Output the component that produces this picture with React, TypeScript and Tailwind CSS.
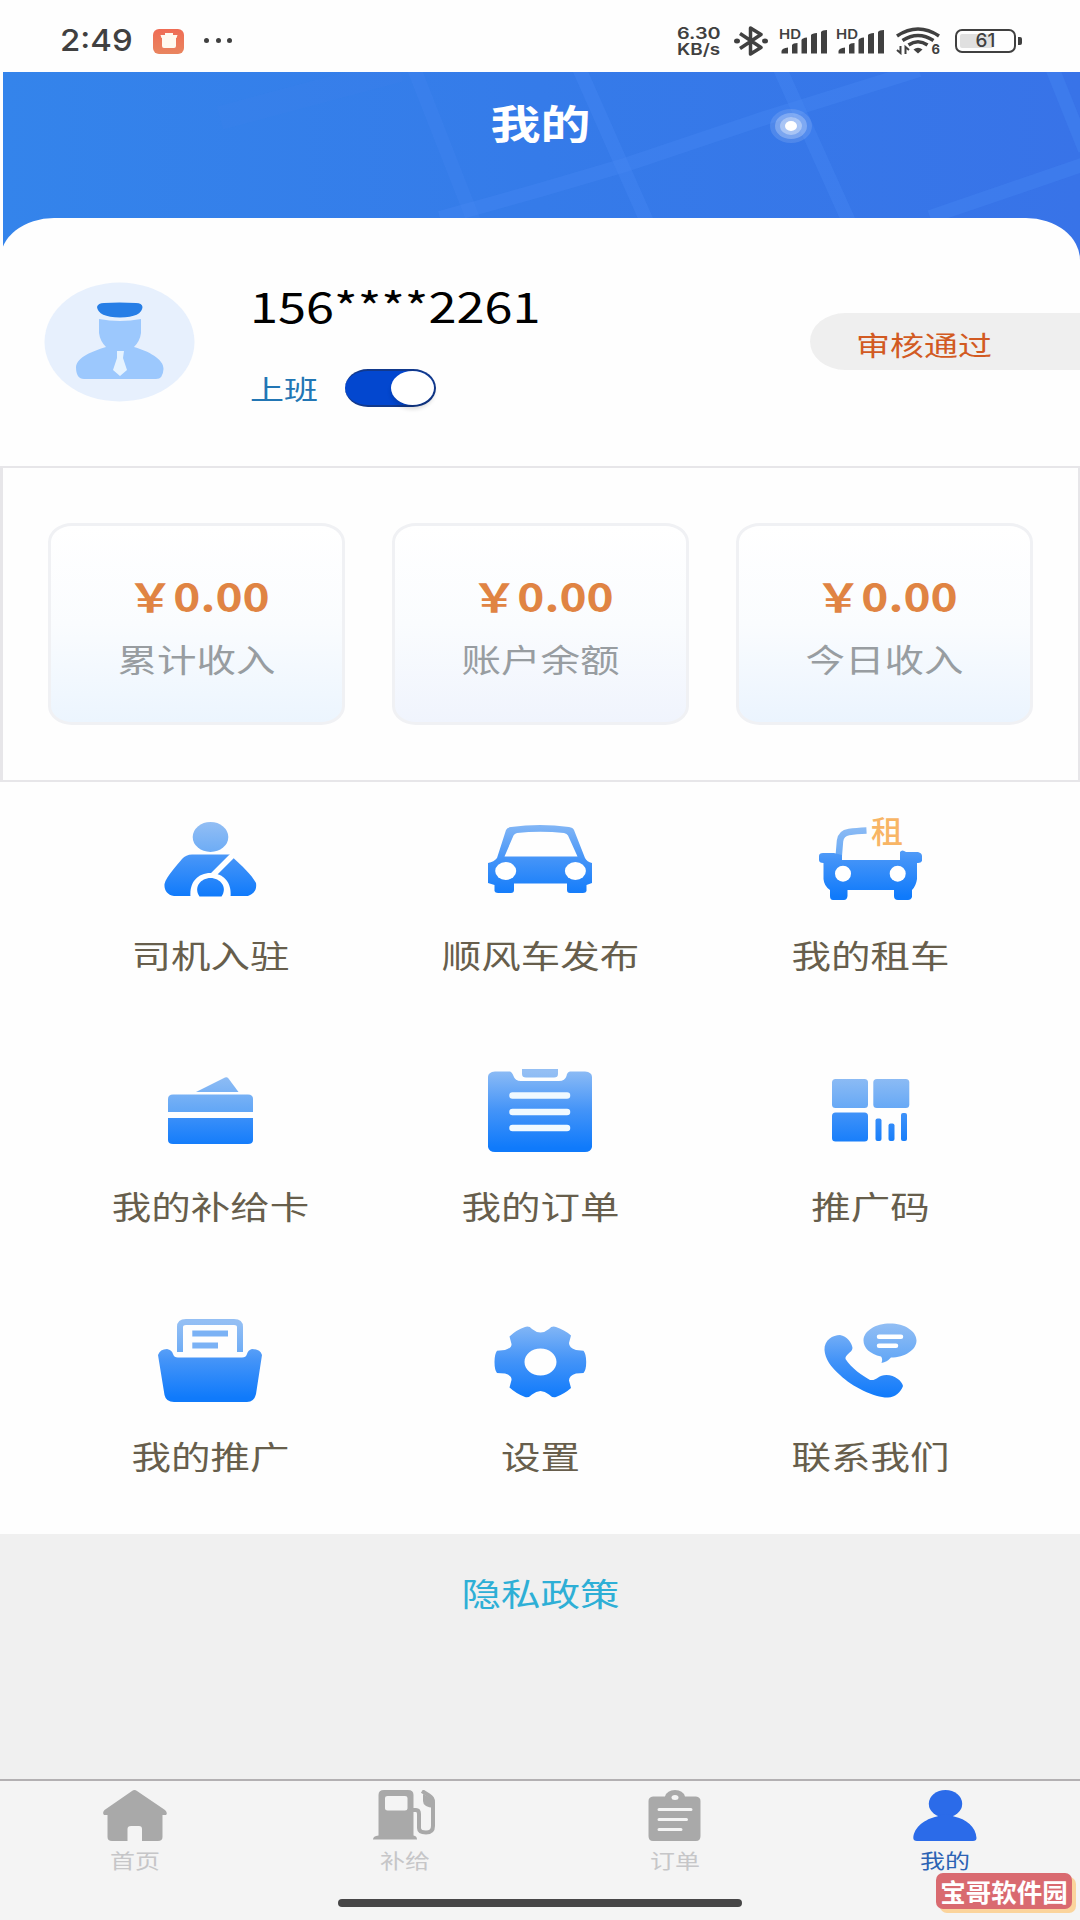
import type { ReactNode } from "react";
import clsx from "clsx";

const stats = [
  { label: "累计收入", value: "￥0.00", bg: "to-[#ecf5fe]" },
  { label: "账户余额", value: "￥0.00", bg: "to-[#f0f4fd]" },
  { label: "今日收入", value: "￥0.00", bg: "to-[#ebf4fe]" },
];

function Gradients() {
  return (
    <svg className="absolute w-0 h-0">
      <defs>
        <linearGradient id="blue" gradientUnits="userSpaceOnUse" x1="0" y1="4" x2="0" y2="80">
          <stop offset="0" stopColor="#8abaf5" />
          <stop offset="0.5" stopColor="#4494f8" />
          <stop offset="1" stopColor="#0f7afb" />
        </linearGradient>
        <linearGradient id="pale" gradientUnits="userSpaceOnUse" x1="0" y1="4" x2="0" y2="46">
          <stop offset="0" stopColor="#94bff4" />
          <stop offset="1" stopColor="#5fa5f6" />
        </linearGradient>
      </defs>
    </svg>
  );
}

function MenuIcon({ children }: { children: ReactNode }) {
  return (
    <svg width="104" height="86" viewBox="0 0 104 86" fill="url(#blue)" className="overflow-visible">
      {children}
    </svg>
  );
}

const menu = [
  {
    label: "司机入驻",
    icon: (
      <MenuIcon>
        <ellipse cx="52.5" cy="20" rx="17.8" ry="15" fill="url(#pale)" />
        <path d="M16 79C9 78 6 73 6.5 67C8 60 20 47 24 42Q28 37.5 34 37.5H72L77 42.5C82 47 94 58 98 66C99 73 96 77 90 79Z" />
        <path d="M76 37L53 60" stroke="#fff" strokeWidth="5.5" />
        <path d="M32.500 80C31 65 40 56 52.500 56S74 65 72.500 80Z" fill="#fff" />
        <path d="M41.500 79.500C35 70 43 61 52.500 61S70 70 63.500 79.500Z" />
      </MenuIcon>
    ),
  },
  {
    label: "顺风车发布",
    icon: (
      <MenuIcon>
        <path
          fillRule="evenodd"
          d="M0 46Q6 45 9 41L18 13Q19 10.500 23 10Q52 6 81 10Q85 10.500 86 13L97 41Q99 45 104 46V66L98.500 68V74Q98 76 95 76H82Q79 76 79 73V66.500H26V73Q26 76 23 76H10Q7 76 6.500 74V68L0 66ZM16.500 39.500H89.500L80 18.500Q79 16.500 76 16Q52 13.500 29 16Q26.500 16.500 25.500 18.500Z"
        />
        <ellipse cx="17.700" cy="54" rx="10.500" ry="9" fill="#fff" />
        <ellipse cx="87.400" cy="54" rx="10.500" ry="9" fill="#fff" />
      </MenuIcon>
    ),
  },
  {
    label: "我的租车",
    icon: (
      <MenuIcon>
        <path
          d="M20.500 42L22 24Q23 16 31 15Q38 14 48.500 13.500"
          fill="none"
          stroke="url(#pale)"
          strokeWidth="6.500"
        />
        <path d="M1 39Q1 36 5 36H16L24 38V43H82V35Q84 32 88 35H100Q104 36 104 39V44Q103 46 100 46H99V62Q98 69 94 73V80Q93 83 90 83H80Q76 83 76 79V73H29.500V79Q29 83 26 83H15Q12 83 12 79V73Q6 69 5.500 62V46Q1 46 1 43Z" />
        <circle cx="25" cy="56.700" r="8" fill="#fff" />
        <circle cx="79.700" cy="56.700" r="8" fill="#fff" />
        <text
          x="53"
          y="27"
          className="font-['Noto_Sans_CJK_SC',sans-serif] text-[32px] font-medium"
          fill="#f8b565"
          transform="scale(1 0.95)"
        >
          租
        </text>
      </MenuIcon>
    ),
  },
  {
    label: "我的补给卡",
    icon: (
      <MenuIcon>
        <path d="M38 24L67 9.500Q69 8.500 70.500 10.500L80.500 24Z" fill="url(#pale)" />
        <path d="M10 44V31Q10 26.500 15 26.500H90Q95 26.500 95 31V44Z" fill="url(#pale)" />
        <path d="M10 50H95V72Q95 76 90 76H15Q10 76 10 72Z" />
      </MenuIcon>
    ),
  },
  {
    label: "我的订单",
    icon: (
      <MenuIcon>
        <path d="M7 3.500H22Q24 4 25.500 8Q27 13 33 13H71Q77 13 78.500 8Q79 4 82 3.500H97Q104 4 104 9V79Q103 84 97 84H7Q1 84 0 79V9Q0 4 7 3.500Z" />
        <path d="M34 1H70V6Q70 9.500 66 9.500H38Q34 9.500 34 6Z" fill="url(#pale)" />
        <path d="M24.500 27.500H79M24.500 44H79M24.500 60H79" stroke="#f0f9ff" strokeWidth="6.500" strokeLinecap="round" />
      </MenuIcon>
    ),
  },
  {
    label: "推广码",
    icon: (
      <MenuIcon>
        <rect x="14" y="11" width="36" height="29" rx="3.500" fill="url(#pale)" />
        <rect x="55.300" y="11" width="36" height="29" rx="3.500" fill="url(#pale)" />
        <rect x="14" y="44.500" width="36" height="29" rx="3.500" />
        <rect x="57.500" y="50.500" width="6" height="22.500" rx="2" />
        <rect x="70.500" y="55.500" width="6" height="17.500" rx="2" />
        <rect x="83" y="45" width="6" height="28" rx="2" />
      </MenuIcon>
    ),
  },
  {
    label: "我的推广",
    icon: (
      <MenuIcon>
        <path
          d="M22 34V9Q22 4 28 4H76Q82 4 82 9V34"
          fill="none"
          stroke="url(#pale)"
          strokeWidth="6"
        />
        <path d="M34.300 15.500H70M34.300 27.500H60" stroke="#7bb2f5" strokeWidth="6" />
        <path d="M0 37Q2 31 9 31Q14 32 15 36Q16 39.500 20 39.500H84Q88 39.500 89 36Q90 32 94 31Q102 31 104 37L98 76Q96 84 89 84H16Q8 84 6.500 77Z" />
      </MenuIcon>
    ),
  },
  {
    label: "设置",
    icon: (
      <MenuIcon>
        <path
          fillRule="evenodd"
          d="M9 32.700L17 32Q24 30 23.500 26L21.500 18.500Q28 12 37 9Q41 7.500 44 11Q52.500 18 61 11Q64 7.500 68 9Q77 12 83 17.500L81 25Q81 30 88 32L95.500 32.700Q98.200 36 98.200 44T95.500 55L88 55.500Q81 57.500 81 62.500L83 70Q77 75.500 68 79Q64 80 61 76.500Q52.500 69.500 44 76.500Q41 80 37 79Q28 75.500 21.500 69.500L23.500 62Q24 57.500 17 55.500L9 55Q6.500 52 6.500 44T9 32.700ZM52.500 30.500C43.500 30.500 36.500 36.500 36.500 44S43.500 57.500 52.500 57.500S68.500 51.500 68.500 44S61.500 30.500 52.500 30.500Z"
        />
      </MenuIcon>
    ),
  },
  {
    label: "联系我们",
    icon: (
      <MenuIcon>
        <path d="M6.500 32C6 22 15 17 22 17C29 18 34 25 34.500 30C34 35 27 36 27.500 41C33 50 45 58 52 62C59 63 60 57 68.500 57C77 57 84 63 85 68C83 74 77 79.500 70 79.500C58 80 34 69 22 57C13 49 7 41 6.500 32Z" />
        <path
          d="M72 5.500C86.500 5.500 98.500 13 98.500 22.500S86.500 39.500 73 39.500Q69 44 63.500 45Q65 41 63 38.500C52 36 45.500 30 45.500 22.500C45.500 13 57.500 5.500 72 5.500Z"
          fill="url(#pale)"
        />
        <path d="M61 18.700H83M61 27.700H78" stroke="#fff" strokeWidth="4.500" strokeLinecap="round" />
      </MenuIcon>
    ),
  },
];

const tabs = [
  {
    label: "首页",
    icon: (
      <path d="M29 1Q31.500 -1 34 1L62 20Q65 23 63 25H59.500V47Q59.500 51 55 51H39V39Q39 36 36 36H28Q24.500 36 24.500 39V51H9Q4.500 51 4.500 47V25H1Q-1 23 1.500 20Z" />
    ),
  },
  {
    label: "补给",
    icon: (
      <>
        <path
          fillRule="evenodd"
          d="M5.500 5Q5.500 0 11 0H35Q40.500 0 40.500 5V45.500Q44 46 44 49.500H0Q0 46 5.500 45.500ZM14.500 6Q12 6 12 8V18.500Q12 20.500 14.500 20.500H32Q34.500 20.500 34.500 18.500V8Q34.500 6 32 6Z"
        />
        <path
          d="M40 20H43Q46 20 46 24V38Q46 42.500 53 42.500Q60 42.500 60 36V12Q60 8 56 5.500L49 1"
          fill="none"
          stroke="#a9a9a9"
          strokeWidth="4"
        />
        <path d="M50 4L61 10V18Q50 17 50 11Z" />
      </>
    ),
  },
  {
    label: "订单",
    icon: (
      <>
        <path d="M10 6.500H22Q24 0 32 0T42 6.500H53Q57.500 7 57.500 11V46Q57.500 51 53 51H10Q5.500 51 5.500 46V11Q5.500 7 10 6.500Z" />
        <ellipse cx="32" cy="7.500" rx="3.500" ry="2.500" fill="#f4f4f4" />
        <path d="M16 19.500H48M16 29.500H43.500M16 39.500H38" stroke="#f4f4f4" strokeWidth="3" strokeLinecap="round" />
      </>
    ),
  },
  {
    label: "我的",
    active: true,
    icon: (
      <>
        <ellipse cx="32.500" cy="13.800" rx="16.700" ry="13.800" />
        <path d="M0.300 48C1 37 12 29 24 26.500Q32 22 41 26.500C53 29 63 37 63.500 48Q63.500 51 60 51H4Q0.300 51 0.300 48Z" />
      </>
    ),
  },
];

function Signal() {
  return (
    <svg width="50" height="27" viewBox="0 0 50 27" fill="#404040">
      <text x="0" y="10.500" className="font-[Inter,sans-serif] text-[12.500px] font-semibold" textLength="22" lengthAdjust="spacingAndGlyphs">
        HD
      </text>
      <path d="M2.500 23Q3 20 9 19.500V25.500H2.500ZM13 17Q14 15 18.500 15V25.500H13ZM22.500 12Q23 10 28 9.500V25.500H22.500ZM32 7Q33 5.500 38 5V25.500H32ZM42 4Q43 2 48 2V25.500H42Z" />
    </svg>
  );
}

function StatusBar() {
  return (
    <div className="h-[72px] shrink-0 flex items-center pt-[8px] pb-[6px] pl-[60px] pr-[58px] text-[#404040]">
      <span className="w-[93px] font-[Inter,sans-serif] text-[30.500px] leading-none font-medium origin-left scale-x-[1.08] pt-1.5">
        2:49
      </span>
      <div className="w-[31px] h-[25px] mt-2 rounded-[6px] bg-linear-to-b from-[#ef6c55] to-[#e9855f] flex items-center justify-center">
        <svg width="18" height="16" viewBox="0 0 18 16" fill="#fffaf0">
          <path d="M5 0H13V2H17.500L16.500 5H16V13Q16 15 14 15H4Q2 15 2 13V5H1.500L0.500 2H5Z" />
        </svg>
      </div>
      <div className="flex gap-[6.500px] ml-5 mt-1.5">
        <i className="w-[5px] h-[5px] rounded-full bg-[#404040]" />
        <i className="w-[5px] h-[5px] rounded-full bg-[#404040]" />
        <i className="w-[5px] h-[5px] rounded-full bg-[#404040]" />
      </div>
      <div className="flex items-center ml-auto mt-2">
        <div className="w-[57px] flex flex-col font-[Inter,sans-serif] text-[16px] leading-[16px] font-semibold">
          <span className="origin-left scale-x-[1.24]">6.30</span>
          <span className="origin-left scale-x-[1.18]">KB/s</span>
        </div>
        <svg width="34" height="30" viewBox="0 0 34 30" className="mr-[11px]" fill="none" stroke="#404040" strokeWidth="3.500">
          <path d="M6 7.500L27 21.500L16.500 28V2L27 8.500L6 22.500" strokeLinejoin="round" />
          <ellipse cx="3" cy="15" rx="3" ry="2.500" fill="#404040" stroke="none" />
          <ellipse cx="31" cy="15" rx="3" ry="2.500" fill="#404040" stroke="none" />
        </svg>
        <Signal />
        <div className="ml-[7.500px]">
          <Signal />
        </div>
        <svg width="46" height="28" viewBox="0 0 46 28" className="ml-[10px]" fill="none" stroke="#404040" strokeWidth="3.500">
          <path d="M1 9Q22 -5 43 9M6.500 13.500Q22 3.500 37.500 13.500M12.500 18Q22 11.500 31.500 18" />
          <path d="M17.500 22.500Q22 19 26.500 22.500L22 26.500Z" fill="#404040" stroke="none" />
          <path d="M4.500 19V26L1 23M9.500 27V20L13 23" strokeWidth="2" />
          <text x="35.500" y="26.500" className="font-[Inter,sans-serif] text-[13px] font-bold" fill="#404040" stroke="none">
            6
          </text>
        </svg>
        <div className="relative ml-[13px] w-[61px] h-[24px] rounded-[7px] border-[2.500px] border-[#404040] flex items-center justify-center">
          <div className="absolute left-[3px] inset-y-[3px] w-[33px] bg-[#e0e0e0] rounded-[2px]" />
          <span className="relative font-[Inter,sans-serif] text-[18px] leading-none scale-x-[1.05] font-medium">61</span>
        </div>
        <i className="ml-[2px] w-[4px] h-[8px] rounded-r-[2px] bg-[#404040]" />
      </div>
    </div>
  );
}

export default function App() {
  return (
    <div className="relative w-[1080px] h-[1920px] overflow-hidden bg-[#fefefe] flex flex-col font-['Noto_Sans_CJK_SC',sans-serif]">
      <Gradients />
      <StatusBar />

      <header className="relative h-[190px] ml-[3px] shrink-0 bg-linear-to-r from-[#3484eb] via-[#357be9] to-[#3873e8]">
        <svg className="absolute inset-0" width="1077" height="190" viewBox="3 72 1077 190" fill="none">
          <g stroke="#4686f2" strokeOpacity="0.400" strokeWidth="14">
            <path d="M440 218L540 190L625 165L765 118L919 70" />
            <path d="M578 66L648 224M776 60L850 224M1049 60L1085 150M930 217L1085 164" />
            <path d="M413 66L475 224" strokeOpacity="0.250" />
            <path d="M220 118L400 70" strokeOpacity="0.120" strokeWidth="24" />
          </g>
          <ellipse cx="791" cy="126" rx="21" ry="17" fill="#fff" fillOpacity="0.120" />
          <ellipse cx="791" cy="126" rx="16" ry="13" fill="#fff" fillOpacity="0.250" />
          <ellipse cx="791" cy="126" rx="11" ry="9" fill="#fff" fillOpacity="0.350" />
          <ellipse cx="791" cy="126" rx="6" ry="5" fill="#fff" />
        </svg>
        <h1 className="relative -ml-[2px] h-[98px] flex items-center justify-center text-white text-[50px] font-bold leading-none">
          <span className="scale-y-[0.8]">我的</span>
        </h1>
      </header>

      <section className="relative -mt-[44px] h-[248px] shrink-0 bg-[#fefefe] rounded-t-[54px_42px] flex">
        <svg className="mt-[64px] ml-[44px]" width="151" height="120" viewBox="0 0 151 120">
          <ellipse cx="75.500" cy="60" rx="75" ry="59.500" fill="#e7f0fd" />
          <path d="M53 25Q54 21 60 21Q75 20 92 21Q98 21 98.500 25Q98 35 76 35.500Q54 35 53 25Z" fill="#277ee6" />
          <path
            d="M55 37Q76 41 97 37V51Q96 59 90 65C104 69 120 77 119.500 87Q119 97 112 97H40Q32 97 32 85C33 75 49 69 62 65Q56 59 55 51Z"
            fill="#9cc8fd"
          />
          <path d="M73 69H80L79 76L83 88L76 94L69 88L73 76Z" fill="#e6f3ff" />
        </svg>
        <div className="ml-[55px] flex flex-col">
          <span className="mt-[62px] text-[50.500px] leading-none text-black scale-y-[0.82] whitespace-nowrap">156****2261</span>
          <div className="flex items-center mt-[38.500px] h-[38px]">
            <span className="mt-[2px] text-[34px] leading-none text-[#2276b4] scale-y-[0.8]">上班</span>
            <div className="ml-[27px] w-[91px] h-[38px] rounded-[23px/19px] bg-[#0347cf] border-y-2 border-r-2 border-[#12398c] flex justify-end">
              <div className="w-[43px] h-[34px] rounded-[50%] bg-white shadow-[0_4px_4px_rgba(0,0,0,0.150)]" />
            </div>
          </div>
        </div>
        <div className="ml-auto mt-[95px] w-[270px] h-[57px] pl-[46px] pt-[6px] bg-[#efefef] rounded-l-[36px_29px] flex items-center text-[34px] leading-none text-[#d25a22]">
          <span className="scale-y-[0.8]">审核通过</span>
        </div>
      </section>

      <section className="h-[316px] shrink-0 border-2 border-l-3 border-[#e7e6e9] pt-[55px] pl-[45px] flex items-start gap-[47px]">
        {stats.map((s) => (
          <div
            key={s.label}
            className={clsx(
              "w-[297px] h-[202px] border-3 border-[#f0f1f4] rounded-[24px/19px] bg-linear-to-b from-white via-[#fafcfe] flex flex-col items-center",
              s.bg
            )}
          >
            <span className="mt-[46px] ml-[4px] text-[46px] leading-none font-bold text-[#e08443] scale-y-[0.84]">{s.value}</span>
            <span className="mt-[20px] text-[39.500px] leading-none text-[#989da1] scale-y-[0.8]">{s.label}</span>
          </div>
        ))}
      </section>

      <section className="h-[752px] shrink-0 pt-[35px] px-[45px] grid grid-cols-3 auto-rows-[250.500px]">
        {menu.map((m) => (
          <div key={m.label} className="flex flex-col items-center">
            {m.icon}
            <span className="mt-[31px] ml-[1px] text-[39.500px] leading-none text-[#675e4c] scale-y-[0.8]">{m.label}</span>
          </div>
        ))}
      </section>

      <section className="h-[245px] shrink-0 bg-[#f0f0f0] pt-[37.500px] text-center text-[39.500px] leading-none text-[#2eafd6]">
        <span className="inline-block ml-[1px] scale-y-[0.8]">隐私政策</span>
      </section>

      <nav className="h-[141px] shrink-0 bg-[#f4f4f4] border-t-2 border-[#b3b0b2] pt-[9px] flex flex-col items-center">
        <div className="w-full grid grid-cols-4">
          {tabs.map((t) => (
            <div key={t.label} className="flex flex-col items-center">
              <svg width="64" height="52" viewBox="0 0 64 52" fill={t.active ? "#2b6be9" : "#a9a9a9"}>
                {t.icon}
              </svg>
              <span
                className={clsx(
                  "mt-[6px] mb-[1px] text-[25px] leading-none scale-y-[0.8]",
                  t.active ? "text-[#2c63b4]" : "text-[#c6c6c8]"
                )}
              >
                {t.label}
              </span>
            </div>
          ))}
        </div>
        <div className="mt-[25px] w-[404px] h-[8px] rounded-full bg-[#474647]" />
      </nav>

      {/* site badge over the tab bar */}
      <div className="absolute right-[8px] bottom-[11px] w-[136px] h-[36px] rounded-[7px] bg-[#d96a70] shadow-[4px_4px_0_#fbd49c] flex items-center justify-center text-[25.500px] leading-none font-bold text-white whitespace-nowrap">
        宝哥软件园
      </div>
    </div>
  );
}
